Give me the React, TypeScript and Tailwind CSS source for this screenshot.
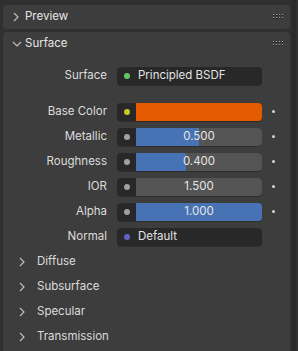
import React from "react";

const font = { fontFamily: "Inter, 'Noto Sans', sans-serif" };

function ChevronRight() {
  return (
    <svg width="6" height="10" viewBox="0 0 6 10" className="shrink-0">
      <path d="M1 1 L5 5 L1 9" fill="none" stroke="#c4c4c4" strokeWidth="1.1" />
    </svg>
  );
}

function ChevronDown() {
  return (
    <svg width="10" height="6" viewBox="0 0 10 6" className="shrink-0">
      <path d="M1 1 L5 5 L9 1" fill="none" stroke="#c4c4c4" strokeWidth="1.1" />
    </svg>
  );
}

function Grip() {
  const dots: React.ReactNode[] = [];
  for (let c = 0; c < 4; c++) {
    for (let r = 0; r < 2; r++) {
      dots.push(<rect key={`s${c}${r}`} x={c * 3} y={r * 3 + 1} width="1" height="1" fill="#1a1a1a" />);
      dots.push(<rect key={`l${c}${r}`} x={c * 3} y={r * 3} width="1" height="1" fill="#a8a8a8" />);
    }
  }
  return (
    <svg width="11" height="6" viewBox="0 0 11 6" className="shrink-0">
      {dots}
    </svg>
  );
}

function Dot({ color }: { color: string }) {
  return <div className="w-[6px] h-[6px] rounded-full" style={{ background: color }} />;
}

function Label({ text }: { text: string }) {
  return <div className="w-[104px] text-right text-[11.5px] text-[#dcdcdc] leading-none">{text}</div>;
}

function SocketField({ dot, text, label }: { dot: string; text: string; label: string }) {
  return (
    <div className="flex items-center h-[25px]">
      <Label text={label} />
      <div className="ml-[10px] w-[145px] h-[18px] rounded-[4px] bg-[#282828] flex items-center shadow-[0_1px_0_rgba(0,0,0,0.25)]">
        <div className="w-[19px] flex justify-center">
          <Dot color={dot} />
        </div>
        <span className="text-[11.5px] text-[#e2e2e2] leading-none ml-[2px]">{text}</span>
      </div>
    </div>
  );
}

function SliderRow({ label, value, frac, dot }: { label: string; value?: string; frac: number; dot: string }) {
  return (
    <div className="flex items-center h-[25px]">
      <Label text={label} />
      <div className="ml-[10px] w-[145px] h-[18px] rounded-[4px] bg-[#282828] flex overflow-hidden shadow-[0_1px_0_rgba(0,0,0,0.25)]">
        <div className="w-[19px] flex items-center justify-center shrink-0">
          <Dot color={dot} />
        </div>
        {value === undefined ? (
          <div className="flex-1 bg-[#e65a00]" />
        ) : (
          <div className="relative flex-1 bg-[#545454] flex items-center justify-center">
            <div className="absolute left-0 top-0 bottom-0 bg-[#4772b3]" style={{ width: `${frac * 100}%` }} />
            <span className="relative text-[11.5px] text-[#e6e6e6] leading-none">{value}</span>
          </div>
        )}
      </div>
      <div className="w-[22px] flex justify-center">
        <div className="w-[3px] h-[3px] rounded-full bg-[#d6d6d6]" />
      </div>
    </div>
  );
}

function SubPanel({ text }: { text: string }) {
  return (
    <div className="flex items-center h-[25px]">
      <div className="w-[16px]" />
      <ChevronRight />
      <span className="ml-[12px] text-[11.5px] text-[#dcdcdc] leading-none">{text}</span>
    </div>
  );
}

export default function App() {
  return (
    <div className="w-[298px] h-[351px] bg-[#303030] flex overflow-hidden" style={font}>
      <div className="w-[290px] pl-[3px] pt-[5px] flex flex-col gap-[3px]">
        <div className="h-[24px] rounded-[4px] bg-[#3d3d3d] flex items-center pl-[10px] pr-[6px]">
          <ChevronRight />
          <span className="ml-[6px] text-[11.5px] text-[#e6e6e6] leading-none">Preview</span>
          <div className="flex-1" />
          <Grip />
        </div>
        <div className="flex-1 rounded-t-[4px] bg-[#3d3d3d] flex flex-col">
          <div className="h-[24px] flex items-center pl-[9px] pr-[6px]">
            <ChevronDown />
            <span className="ml-[3px] text-[11.5px] text-[#e6e6e6] leading-none">Surface</span>
            <div className="flex-1" />
            <Grip />
          </div>
          <div className="mt-[7px]">
            <SocketField dot="#63c763" text="Principled BSDF" label="Surface" />
          </div>
          <div className="mt-[11px]">
            <SliderRow label="Base Color" frac={1} dot="#c7c729" />
            <SliderRow label="Metallic" value="0.500" frac={0.5} dot="#a1a1a1" />
            <SliderRow label="Roughness" value="0.400" frac={0.4} dot="#a1a1a1" />
            <SliderRow label="IOR" value="1.500" frac={0} dot="#a1a1a1" />
            <SliderRow label="Alpha" value="1.000" frac={1} dot="#a1a1a1" />
            <SocketField dot="#6363c7" text="Default" label="Normal" />
          </div>
          <div>
            <SubPanel text="Diffuse" />
            <SubPanel text="Subsurface" />
            <SubPanel text="Specular" />
            <SubPanel text="Transmission" />
          </div>
        </div>
      </div>
      <div className="w-[8px] flex">
        <div className="w-[2px]" />
        <div className="w-[4px] bg-[#2a2a2a]" />
      </div>
    </div>
  );
}
